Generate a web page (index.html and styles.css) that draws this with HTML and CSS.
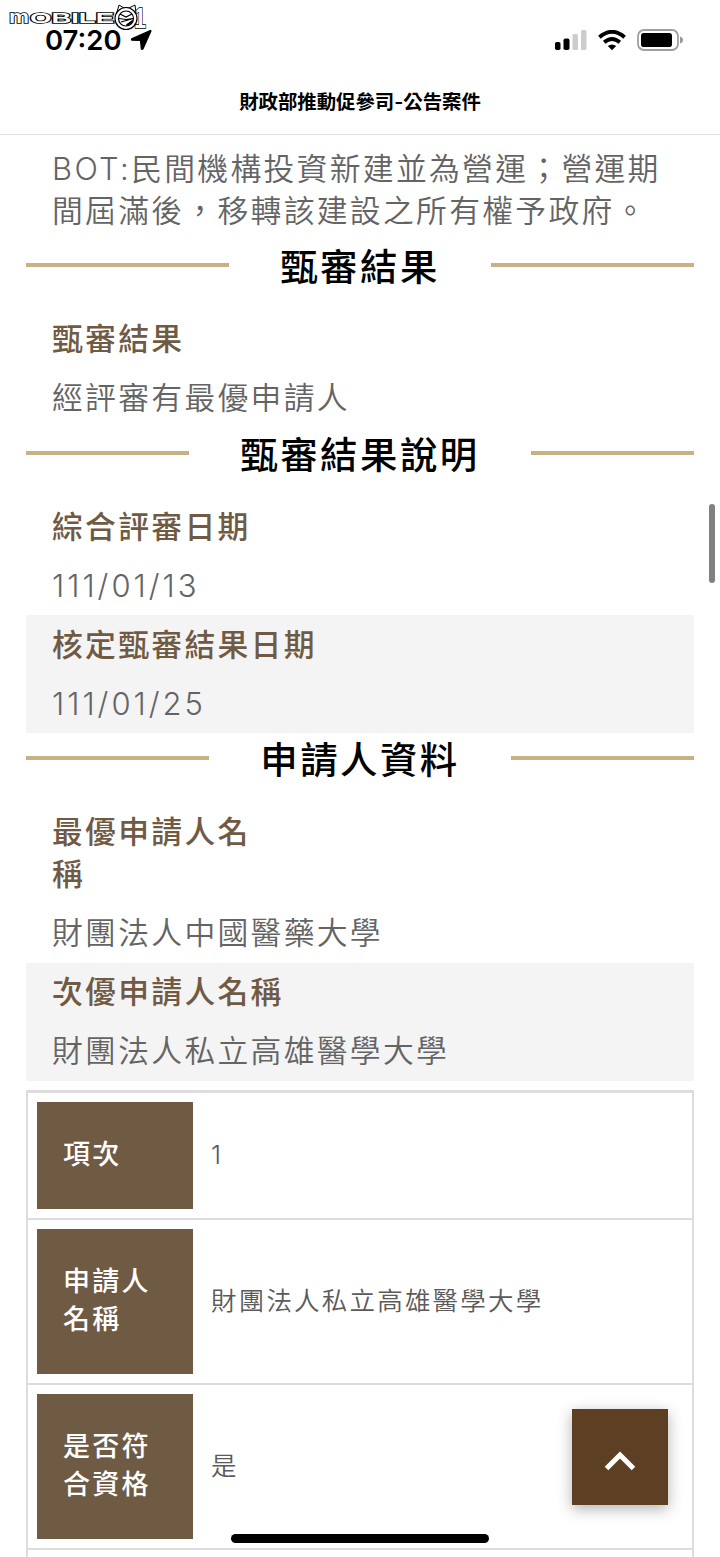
FILE: index.html
```
<!DOCTYPE html>
<html lang="zh-Hant">
<head>
    <meta charset="UTF-8">
    <meta name="viewport" content="width=device-width, initial-scale=1.0">
    <title>財政部推動促參司-公告案件</title>
    <link rel="stylesheet" href="styles.css">
</head>
<body>

<header class="top">
    <svg class="watermark" width="160" height="40" viewBox="0 0 160 40">
        <g class="outline">
            <text x="9" y="23" font-size="18.5" textLength="20" lengthAdjust="spacingAndGlyphs">m</text>
            <text x="30" y="23" font-size="14.5" textLength="84" lengthAdjust="spacingAndGlyphs">OBILE</text>
            <text x="134" y="28" font-size="30" textLength="12" lengthAdjust="spacingAndGlyphs">1</text>
        </g>
        <path d="M117 12L119 5L124 8Q127 7 129 8L135 5L136 13" fill="#fff" stroke="#000"/>
        <circle cx="126" cy="18.500" r="11" fill="#fff" stroke="#000" stroke-width="1.200"/>
        <circle cx="126" cy="18.500" r="7.500" fill="#fff" stroke="#000" stroke-width="1.200"/>
        <path d="M120 14L126 17L132 14M119 18.500L126 19.500L133 18.500L128 20L121 22" fill="none" stroke="#000" stroke-width="1.200"/>
        <path d="M126 24.500L133 19.500Q132.500 24 127 26Z"/>
    </svg>
    <div class="status-bar">
        <div class="time">
            <span>07:20</span>
            <svg width="22" height="22" viewBox="0 0 22 22"><path d="M20.300 1.500L1.800 9.800Q1 10.800 2 11.200L10.500 11.500L11.300 19.700Q11.800 21 13 19.800L20.900 2Q21 1.300 20.300 1.500Z" stroke="#000" stroke-width="1.200"/></svg>
        </div>
        <div class="indicators">
            <svg width="32" height="20" viewBox="0 0 32 20">
                <rect x="0" y="12" width="5.500" height="8" rx="1.800"/>
                <rect x="8.500" y="8.500" width="6" height="11.500" rx="1.800"/>
                <rect x="17.500" y="4" width="5.500" height="16" rx="1.500" fill="#ccc"/>
                <rect x="26" y="0" width="5.500" height="20" rx="1.500" fill="#ccc"/>
            </svg>
            <svg width="28" height="20" viewBox="0 0 28 20">
                <g fill="none" stroke="#000" stroke-width="3.900">
                    <path d="M1.400 7.200Q14 -3.600 26.600 7.200"/>
                    <path d="M6.200 12.200Q14 5.600 21.800 12.200"/>
                </g>
                <path d="M9.800 16Q14 12.800 18.200 16L14 20.200Z"/>
            </svg>
            <svg width="46" height="22" viewBox="0 0 46 22">
                <rect x="1" y="1" width="40" height="20" rx="6" fill="none" stroke="#a0a0a0" stroke-width="1.800"/>
                <rect x="4" y="4" width="31" height="14" rx="2.800"/>
                <path d="M43 7.500Q46 8.500 46 11T43 14.500Z" fill="#999"/>
            </svg>
        </div>
    </div>
    <h1 class="page-title">財政部推動促參司-公告案件</h1>
</header>

<main class="content">
    <div class="value intro"><span class="latin">BOT:</span>民間機構投資新建並為營運；營運期<br>間屆滿後，移轉該建設之所有權予政府。</div>

    <h2 class="section-title">甄審結果</h2>
    <div class="row">
        <div class="label">甄審結果</div>
        <div class="value">經評審有最優申請人</div>
    </div>

    <h2 class="section-title">甄審結果說明</h2>
    <div class="row">
        <div class="label">綜合評審日期</div>
        <div class="value date">111/01/13</div>
    </div>
    <div class="row gray">
        <div class="label">核定甄審結果日期</div>
        <div class="value date">111/01/25</div>
    </div>

    <h2 class="section-title">申請人資料</h2>
    <div class="row">
        <div class="label">最優申請人名<br>稱</div>
        <div class="value">財團法人中國醫藥大學</div>
    </div>
    <div class="row gray">
        <div class="label">次優申請人名稱</div>
        <div class="value">財團法人私立高雄醫學大學</div>
    </div>

    <div class="list">
        <div class="list-row">
            <div class="list-head">項次</div>
            <div class="list-data">1</div>
        </div>
        <div class="list-row">
            <div class="list-head">申請人<br>名稱</div>
            <div class="list-data">財團法人私立高雄醫學大學</div>
        </div>
        <div class="list-row">
            <div class="list-head">是否符<br>合資格</div>
            <div class="list-data">是</div>
        </div>
        <div class="list-row"></div>
    </div>
</main>

<div class="scrollbar"></div>
<a class="go-top" href="#">
    <svg width="32" height="20" viewBox="0 0 32 20"><path d="M2.500 17.500L16 4L29.500 17.500" fill="none" stroke="#fff" stroke-width="5"/></svg>
</a>
<div class="home-bar"></div>

</body>
</html>
```
FILE: styles.css
```
* {
    box-sizing: border-box;
}

body {
    position: relative;
    height: 1557px;
    margin: 0;
    overflow: hidden;
    background: #fff;
    color: #000;
    font-family: Inter, "Noto Sans CJK TC", sans-serif;
}

/* Status bar and page title */
.top {
    height: 135px;
    border-bottom: 1px solid #e2e2e2;
}

.watermark {
    position: absolute;
    left: 0;
    top: 0;
}

.outline {
    fill: #fff;
    stroke: #000;
    stroke-width: 1.6px;
    paint-order: stroke;
    font-family: "Liberation Sans", sans-serif;
    font-weight: bold;
}

.status-bar {
    display: flex;
    justify-content: space-between;
    align-items: center;
    height: 79px;
    padding: 0 37px 0 45px;
}

.time {
    display: flex;
    align-items: center;
    gap: 8px;
    font-size: 27.5px;
    font-weight: 600;
    line-height: 22px;
}

.indicators {
    display: flex;
    align-items: center;
    gap: 11px;
}

.page-title {
    margin: 0;
    font-size: 19.4px;
    font-weight: 600;
    line-height: 46px;
    text-align: center;
}

/* Case details */
.content {
    padding: 4px 26px 0;
}

.section-title {
    display: flex;
    align-items: center;
    gap: 51px;
    height: 69.5px;
    margin: 0;
    padding-bottom: 19px;
    font-size: 37.4px;
    font-weight: 500;
    letter-spacing: 2.5px;
    white-space: nowrap;
}

.section-title::before,
.section-title::after {
    content: "";
    flex: 1;
    height: 4px;
    background: #c7b185;
}

.label,
.value {
    padding: 8.5px 26px;
    font-size: 30.8px;
    line-height: 42px;
    letter-spacing: 2.3px;
    white-space: nowrap;
}

.label {
    color: #705a43;
    font-weight: 500;
}

.value {
    color: #646464;
    font-weight: 350;
}

.latin {
    letter-spacing: 2.4px;
}

.date {
    font-size: 31px;
    letter-spacing: 3px;
}

.gray {
    background: #f4f4f4;
}

/* Applicant list */
.list {
    margin-top: 9px;
    border: 2px solid #ddd;
    border-top-width: 3px;
}

.list-row {
    display: flex;
    align-items: center;
    padding: 9px;
    border-bottom: 2px solid #ddd;
    line-height: 38px;
}

.list-head {
    width: 156px;
    padding: 34.5px 26px;
    background: #6f5a44;
    color: #fff;
    font-size: 27px;
    font-weight: 500;
    letter-spacing: 2.3px;
    white-space: nowrap;
}

.list-data {
    padding-left: 18px;
    color: #5a5a5a;
    font-size: 25.5px;
    font-weight: 350;
    letter-spacing: 2.2px;
}

/* Floating items */
.scrollbar {
    position: absolute;
    top: 504px;
    right: 5px;
    width: 6px;
    height: 79px;
    border-radius: 3px;
    background: #808080;
}

.go-top {
    position: absolute;
    top: 1409px;
    left: 572px;
    display: flex;
    align-items: center;
    justify-content: center;
    width: 96px;
    height: 96px;
    padding-top: 8px;
    background: #5d4023;
    box-shadow: 0 4px 14px rgba(0, 0, 0, 0.3);
}

.home-bar {
    position: absolute;
    top: 1534px;
    left: 231px;
    width: 258px;
    height: 9px;
    border-radius: 5px;
    background: #000;
}
```
